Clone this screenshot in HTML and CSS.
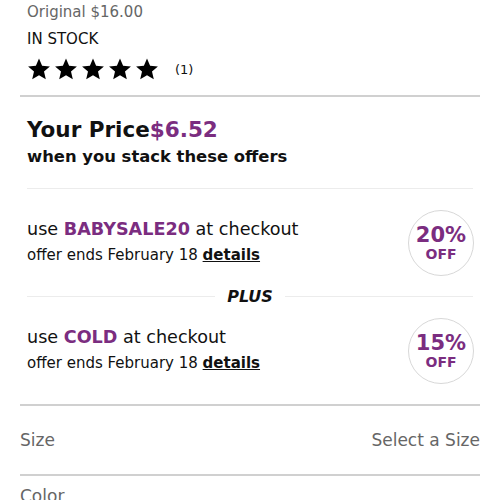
FILE: index.html
```html
<!DOCTYPE html>
<html>
<head>
<meta charset="utf-8">
<link rel="stylesheet" href="styles.css">
</head>
<body>
<div class="page">
  <div class="info">
    <div class="original">Original $16.00</div>
    <div class="stock">IN STOCK</div>
    <div class="rating">
      <div class="stars">
        <svg class="star" viewBox="0 0 24 24"><path d="M12 1.5l3.1 7.2 7.8.7-5.9 5.2 1.8 7.7L12 18.2l-6.8 4.1 1.8-7.7L1.1 9.4l7.8-.7z"/></svg>
        <svg class="star" viewBox="0 0 24 24"><path d="M12 1.5l3.1 7.2 7.8.7-5.9 5.2 1.8 7.7L12 18.2l-6.8 4.1 1.8-7.7L1.1 9.4l7.8-.7z"/></svg>
        <svg class="star" viewBox="0 0 24 24"><path d="M12 1.5l3.1 7.2 7.8.7-5.9 5.2 1.8 7.7L12 18.2l-6.8 4.1 1.8-7.7L1.1 9.4l7.8-.7z"/></svg>
        <svg class="star" viewBox="0 0 24 24"><path d="M12 1.5l3.1 7.2 7.8.7-5.9 5.2 1.8 7.7L12 18.2l-6.8 4.1 1.8-7.7L1.1 9.4l7.8-.7z"/></svg>
        <svg class="star" viewBox="0 0 24 24"><path d="M12 1.5l3.1 7.2 7.8.7-5.9 5.2 1.8 7.7L12 18.2l-6.8 4.1 1.8-7.7L1.1 9.4l7.8-.7z"/></svg>
      </div>
      <span class="count">(1)</span>
    </div>
  </div>
  <hr class="rule">
  <div class="stack">
    <div class="your-price">Your Price<span class="purple">$6.52</span></div>
    <div class="when">when you stack these offers</div>
    <hr class="thin">
    <div class="offer">
      <div class="offer-text">
        <div class="use">use <b class="purple">BABYSALE20</b> at checkout</div>
        <div class="ends">offer ends February 18 <a class="details">details</a></div>
      </div>
      <div class="badge"><span class="pct">20%</span><span class="off">OFF</span></div>
    </div>
    <div class="plus"><span>PLUS</span></div>
    <div class="offer second">
      <div class="offer-text">
        <div class="use">use <b class="purple">COLD</b> at checkout</div>
        <div class="ends">offer ends February 18 <a class="details">details</a></div>
      </div>
      <div class="badge"><span class="pct">15%</span><span class="off">OFF</span></div>
    </div>
  </div>
  <hr class="rule bottom">
  <div class="select-row"><span>Size</span><span>Select a Size</span></div>
  <hr class="rule flat">
  <div class="select-row color"><span>Color</span></div>
</div>
</body>
</html>
```
FILE: styles.css
```css
html, body { margin: 0; padding: 0; background: #fff; }
body { font-family: "DejaVu Sans", "Open Sans", sans-serif; color: #111; }
.page { padding: 0 20px; }
.info { padding-left: 7px; }
.original { font-size: 15px; line-height: 24px; color: #666; }
.stock { font-size: 15px; line-height: 24px; margin-top: 3px; color: #111; }
.rating { display: flex; align-items: center; height: 24px; margin-top: 6px; }
.stars { display: flex; gap: 3px; }
.star { width: 24px; height: 24px; fill: #000; display: block; }
.count { font-size: 13px; margin-left: 16px; color: #111; }
.rule { border: 0; height: 2px; background: #d0d0d0; margin: 14px 0 0; }
.rule.bottom { margin-top: 20px; }
.rule.flat { margin-top: 0; }
.stack { padding: 0 7px; }
.your-price { font-size: 21.5px; font-weight: 700; line-height: 28px; margin-top: 19px; }
.purple { color: #7b2d80; }
.when { font-size: 16.4px; font-weight: 600; line-height: 24px; margin-top: 1px; }
.thin { border: 0; height: 1px; background: #ececec; margin: 19px 0 0; }
.offer { display: flex; justify-content: space-between; align-items: flex-start; margin-top: 21px; }
.offer.second { margin-top: 11px; }
.offer-text { padding-top: 7px; }
.use { font-size: 17.6px; line-height: 24px; }
.use b { font-weight: 700; }
.ends { font-size: 15px; line-height: 24px; margin-top: 2px; }
.details { color: #111; font-weight: 700; text-decoration: underline; }
.badge { width: 64px; height: 64px; border: 1px solid #d8d8d8; border-radius: 50%; display: flex; flex-direction: column; align-items: center; justify-content: center; color: #7b2d80; margin-right: -1px; }
.pct { font-size: 21px; font-weight: 600; line-height: 22px; }
.off { font-size: 14px; font-weight: 600; line-height: 17px; }
.plus { display: flex; align-items: center; gap: 10px; margin-top: 9px; height: 22px; }
.plus::before, .plus::after { content: ""; flex: 1; height: 1px; background: #ececec; }
.plus span { font-size: 16px; font-weight: 800; font-style: italic; padding: 0 2px; }
.select-row { display: flex; justify-content: space-between; align-items: center; height: 68px; font-size: 17px; color: #666; }
.select-row.color { height: 30px; align-items: flex-end; line-height: 20px; }
```
